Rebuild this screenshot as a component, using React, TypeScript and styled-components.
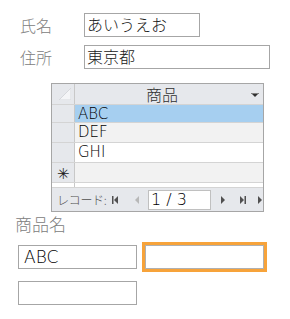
import styled, { createGlobalStyle } from "styled-components";

const GlobalStyle = createGlobalStyle`
  body {
    margin: 0;
    background: #ffffff;
    font-family: "Noto Sans CJK JP", "Liberation Sans", sans-serif;
    font-weight: 300;
  }
`;

const Page = styled.div`
  width: 290px;
  height: 319px;
  padding-top: 13px;
  box-sizing: border-box;
`;

const FieldRow = styled.div`
  display: flex;
  align-items: center;
  padding-left: 20px;
  margin-bottom: 8px;
`;

const Label = styled.span`
  width: 64px;
  font-size: 16px;
  line-height: 20px;
  color: #808080;
`;

const TextBox = styled.div<{ $width: number }>`
  width: ${(p) => p.$width}px;
  height: 24px;
  box-sizing: border-box;
  border: 1px solid #a6a6a6;
  font-size: 16px;
  line-height: 21px;
  padding-left: 2px;
  color: #202020;
  white-space: nowrap;
`;

const Sheet = styled.div`
  margin: 14px 0 0 51px;
  width: 213px;
  height: 129px;
  box-sizing: border-box;
  border: 1px solid #a6a6a6;
  display: flex;
  flex-direction: column;
  background: #ffffff;
`;

const SheetRow = styled.div<{ $h: number; $bg: string }>`
  display: grid;
  grid-template-columns: 23px 1fr;
  grid-template-rows: 100%;
  height: ${(p) => p.$h}px;
  flex: none;
  box-sizing: border-box;
  border-bottom: 1px solid #d4d4d4;
  background: ${(p) => p.$bg};
`;

const Selector = styled.div`
  background: #e6e8ec;
  border-right: 1px solid #c8c8c8;
  display: flex;
  align-items: center;
  justify-content: center;
  font-size: 15px;
  line-height: 18px;
  color: #202020;
  position: relative;
`;

const Cell = styled.div<{ $size?: number }>`
  font-family: "DejaVu Sans", "Liberation Sans", sans-serif;
  font-weight: 200;
  font-size: ${(p) => p.$size ?? 15}px;
  line-height: 18px;
  padding-left: 3px;
  color: #000000;
`;

const HeaderCell = styled.div`
  background: #e6e8ec;
  display: flex;
  align-items: center;
  justify-content: center;
  position: relative;
  font-size: 16px;
  line-height: 19px;
  color: #303030;
  padding-right: 14px;
`;

const DropArrow = styled.svg`
  position: absolute;
  right: 4px;
  top: 9px;
`;

const Spacer = styled.div`
  display: grid;
  grid-template-columns: 23px 1fr;
  height: 4px;
  flex: none;
  & > div:first-child {
    border-right: 1px solid #c8c8c8;
  }
`;

const NavBar = styled.div`
  flex: 1;
  background: #e6e8ec;
  border-top: 1px solid #d4d4d4;
  display: flex;
  align-items: center;
  padding-left: 5px;
  font-size: 12px;
  color: #505050;
  white-space: nowrap;
  overflow: hidden;
`;

const NavLabel = styled.span`
  width: 58px;
  letter-spacing: -0.3px;
`;

const NavButton = styled.svg<{ $gap: number }>`
  margin-right: ${(p) => p.$gap}px;
  flex: none;
`;

const RecordBox = styled.div`
  width: 63px;
  height: 20px;
  box-sizing: border-box;
  border: 1px solid #c0c0c0;
  background: #ffffff;
  font-family: "DejaVu Sans", "Liberation Sans", sans-serif;
  font-weight: 200;
  font-size: 16px;
  line-height: 18px;
  padding-left: 2px;
  color: #000000;
  margin-right: 10px;
  flex: none;
`;

const Caption = styled.div`
  padding-left: 15px;
  margin-top: 2px;
  font-size: 17px;
  line-height: 20px;
  color: #808080;
`;

const BottomGrid = styled.div`
  display: grid;
  grid-template-columns: 119px 125px;
  column-gap: 5px;
  row-gap: 9px;
  padding-left: 18px;
  margin-top: 8px;
  align-items: center;
`;

const FocusBox = styled.div`
  height: 30px;
  box-sizing: border-box;
  border: 3px solid #f7a33a;
  background: #ffffff;
  position: relative;
  &::after {
    content: "";
    position: absolute;
    inset: 0;
    border: 1px solid #b0b0b0;
  }
`;

const Corner = styled.svg`
  position: absolute;
  left: 7px;
  top: 4px;
`;

export default function App() {
  return (
    <>
      <GlobalStyle />
      <Page>
        <FieldRow>
          <Label>氏名</Label>
          <TextBox $width={116}>あいうえお</TextBox>
        </FieldRow>
        <FieldRow>
          <Label>住所</Label>
          <TextBox $width={186}>東京都</TextBox>
        </FieldRow>

        <Sheet>
          <SheetRow $h={21} $bg="#e6e8ec">
            <Selector>
              <Corner width="12" height="12" viewBox="0 0 12 12">
                <polygon points="12,0 12,12 0,12" fill="#f4f5f7" stroke="#d6d8dc" />
              </Corner>
            </Selector>
            <HeaderCell>
              商品
              <DropArrow width="8" height="5" viewBox="0 0 8 5">
                <polygon points="0,0 8,0 4,4" fill="#303030" />
                <rect x="0" y="0" width="8" height="1" fill="#808080" />
              </DropArrow>
            </HeaderCell>
          </SheetRow>
          <SheetRow $h={18} $bg="#a6cff0">
            <Selector />
            <Cell>ABC</Cell>
          </SheetRow>
          <SheetRow $h={20} $bg="#f2f2f2">
            <Selector />
            <Cell>DEF</Cell>
          </SheetRow>
          <SheetRow $h={20} $bg="#ffffff">
            <Selector />
            <Cell>GHI</Cell>
          </SheetRow>
          <SheetRow $h={20} $bg="#f2f2f2">
            <Selector>✳</Selector>
            <Cell />
          </SheetRow>
          <Spacer>
            <div />
            <div />
          </Spacer>
          <NavBar>
            <NavLabel>レコード:</NavLabel>
            <NavButton $gap={17} width="6" height="8" viewBox="0 0 6 8">
              <rect x="0" y="0" width="1.5" height="8" fill="#505050" />
              <polygon points="6,0 6,8 2,4" fill="#505050" />
            </NavButton>
            <NavButton $gap={8} width="5" height="8" viewBox="0 0 5 8">
              <polygon points="4,0 4,8 0,4" fill="#b8b8b8" />
            </NavButton>
            <RecordBox>1 / 3</RecordBox>
            <NavButton $gap={14} width="5" height="8" viewBox="0 0 5 8">
              <polygon points="0,0 0,8 4,4" fill="#505050" />
            </NavButton>
            <NavButton $gap={12} width="6" height="8" viewBox="0 0 6 8">
              <polygon points="0,0 0,8 4,4" fill="#505050" />
              <rect x="4.5" y="0" width="1.5" height="8" fill="#505050" />
            </NavButton>
            <NavButton $gap={0} width="5" height="8" viewBox="0 0 5 8">
              <polygon points="0,0 0,8 4,4" fill="#505050" />
            </NavButton>
          </NavBar>
        </Sheet>

        <Caption>商品名</Caption>
        <BottomGrid>
          <TextBox $width={119}>
            <Cell as="span" $size={17}>ABC</Cell>
          </TextBox>
          <FocusBox />
          <TextBox $width={119} />
        </BottomGrid>
      </Page>
    </>
  );
}
